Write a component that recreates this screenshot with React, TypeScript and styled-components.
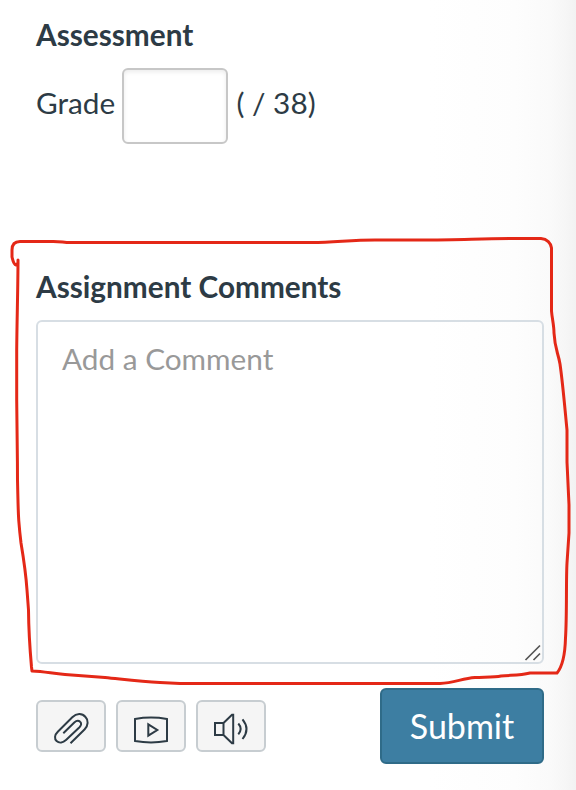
import React from 'react';
import styled, { createGlobalStyle } from 'styled-components';

const GlobalStyle = createGlobalStyle`
  * { box-sizing: border-box; }
  body { margin: 0; background: #fff; }
`;

const Panel = styled.main`
  position: relative;
  display: flex;
  flex-direction: column;
  width: 576px;
  height: 790px;
  padding: 17px 32px 0 36px;
  overflow: hidden;
  color: #2d3b45;
  font: 29.75px/36px Lato, sans-serif;
  background: linear-gradient(to right, #fff 430px, #fdfdfd 515px, #fafafa 550px, #f6f6f6 566px, #f2f2f2 576px);
`;

const Heading = styled.h2`
  margin: 0;
  font-size: 29.75px;
  line-height: 36px;
  font-weight: 700;
`;

const GradeRow = styled.label`
  display: flex;
  align-items: center;
  height: 76px;
  margin: 15px 0 125px;
`;

const GradeLabel = styled.span`
  width: 86px;
  margin-top: -7px;
`;

const GradeInput = styled.input`
  width: 106px;
  height: 76px;
  padding: 8px 16px;
  border: 2px solid #c7c7c7;
  border-radius: 6px;
  outline: none;
  background: #fff;
  box-shadow: inset 0 2px 4px rgba(0, 0, 0, 0.08);
  color: inherit;
  font: inherit;
`;

const Points = styled.span`
  margin: -7px 0 0 8.5px;
`;

const CommentField = styled.div`
  position: relative;
  width: 508px;
  height: 344px;
  margin-top: 15px;
`;

const CommentInput = styled.textarea`
  display: block;
  width: 100%;
  height: 100%;
  padding: 19px 24px;
  border: 2px solid #d7dee4;
  border-radius: 6px;
  outline: none;
  resize: none;
  background: transparent;
  color: inherit;
  font: inherit;
  &::placeholder { color: #999; opacity: 1; }
`;

const ResizeGrip = styled.svg`
  position: absolute;
  right: 2px;
  bottom: 2px;
  width: 18px;
  height: 18px;
  pointer-events: none;
`;

const Actions = styled.div`
  display: flex;
  justify-content: space-between;
  align-items: center;
  width: 508px;
  height: 76px;
  margin-top: 24px;
`;

const MediaButtons = styled.div`
  display: flex;
  gap: 10px;
`;

const MediaButton = styled.button`
  width: 70px;
  height: 52px;
  padding: 0;
  border: 2px solid #c7cdd1;
  border-radius: 6px;
  background: #f5f5f5;
  color: #2d3b45;
`;

const Icon = styled.svg`
  display: block;
  width: 70px;
  height: 52px;
  margin: -2px;
  fill: none;
  stroke: currentColor;
  stroke-width: 2;
`;

const SubmitButton = styled.button`
  width: 164px;
  height: 76px;
  padding: 0;
  border: 2px solid #2f6b88;
  border-radius: 6px;
  background: #3d7ea2;
  color: #fff;
  font: 34px/40px Lato, sans-serif;
`;

const Markup = styled.svg`
  position: absolute;
  inset: 0;
  width: 576px;
  height: 790px;
  pointer-events: none;
  fill: none;
  stroke: #e42817;
  stroke-width: 3;
  stroke-linejoin: round;
  stroke-linecap: round;
`;

export default function App() {
  return (
    <>
      <GlobalStyle />
      <Panel>
        <Heading>Assessment</Heading>
        <GradeRow>
          <GradeLabel>Grade</GradeLabel>
          <GradeInput />
          <Points>( / 38)</Points>
        </GradeRow>
        <Heading>Assignment Comments</Heading>
        <CommentField>
          <CommentInput placeholder="Add a Comment" />
          <ResizeGrip viewBox="0 0 18 18" stroke="#555" strokeWidth="1.7">
            <path d="M1.5 16 16 1.5M9.5 16l6.5-6.5" />
          </ResizeGrip>
        </CommentField>
        <Actions>
          <MediaButtons>
            <MediaButton aria-label="Attach file">
              <Icon viewBox="0 0 70 52">
                <path d="M34.5 43.2 48.5 29.5C52.5 25.5 52.5 20 49.5 17C46 13 40.5 13.2 36.3 17.3L21.8 31.8C18.5 35 18.2 38.7 20.6 41.1C23.2 43.4 27 42.8 30 40L43.5 27.2C45.5 25.2 45.6 23.2 44.1 21.8C42.5 20.2 40.3 20.6 38.3 22.5L27.3 33.3" />
              </Icon>
            </MediaButton>
            <MediaButton aria-label="Record video">
              <Icon viewBox="0 0 70 52">
                <path d="M19 19Q35 16.2 51 19V41Q35 43.8 19 41ZM32.3 24.3V35.7L41.3 30Z" />
              </Icon>
            </MediaButton>
            <MediaButton aria-label="Record audio">
              <Icon viewBox="0 0 70 52">
                <path d="M27.5 23H19V35H27.5ZM27.5 23 36 14.8H37.2V43.2H36L27.5 35M42.3 23.5Q47 29 42.3 34.3M46.5 19.3Q54.5 29 46.5 39" />
              </Icon>
            </MediaButton>
          </MediaButtons>
          <SubmitButton>Submit</SubmitButton>
        </Actions>
        <Markup viewBox="0 0 576 790">
          <path d="M18 260C18 285 17 318 16.7 350L16.7 400C17 435 17.5 455 17.5 480C18 500 18 510 18.8 521C19.5 530 20 535 21 543C24 561 26 575 27 590L28.5 610C28.7 635 30 650 31.5 667L32 671C45 671.5 52 673.5 65 674.5L105 677.5C125 679.5 140 681.5 160 682.5L180 683.5H440C454 683 462 678.5 475 677.5C485 677 495 677.3 501 676C512 675 520 675.5 530 673H557C562 667 565 657 565.5 638C567 615 566 580 567 563L569 533V505L567 462V430C565 410 563 385 560 364C558 352 555 350 554 333C554 325 552 318 551.5 311V248C551 243 547 239 541 238.5C500 238 460 240 430 240H375C350 240 335 242.5 312 242.5H70C63 242.5 60 241 50 241.5H20C14 241.5 12 245 12 250V257C13 261 13.5 264.5 16 265L18 263" />
        </Markup>
      </Panel>
    </>
  );
}
